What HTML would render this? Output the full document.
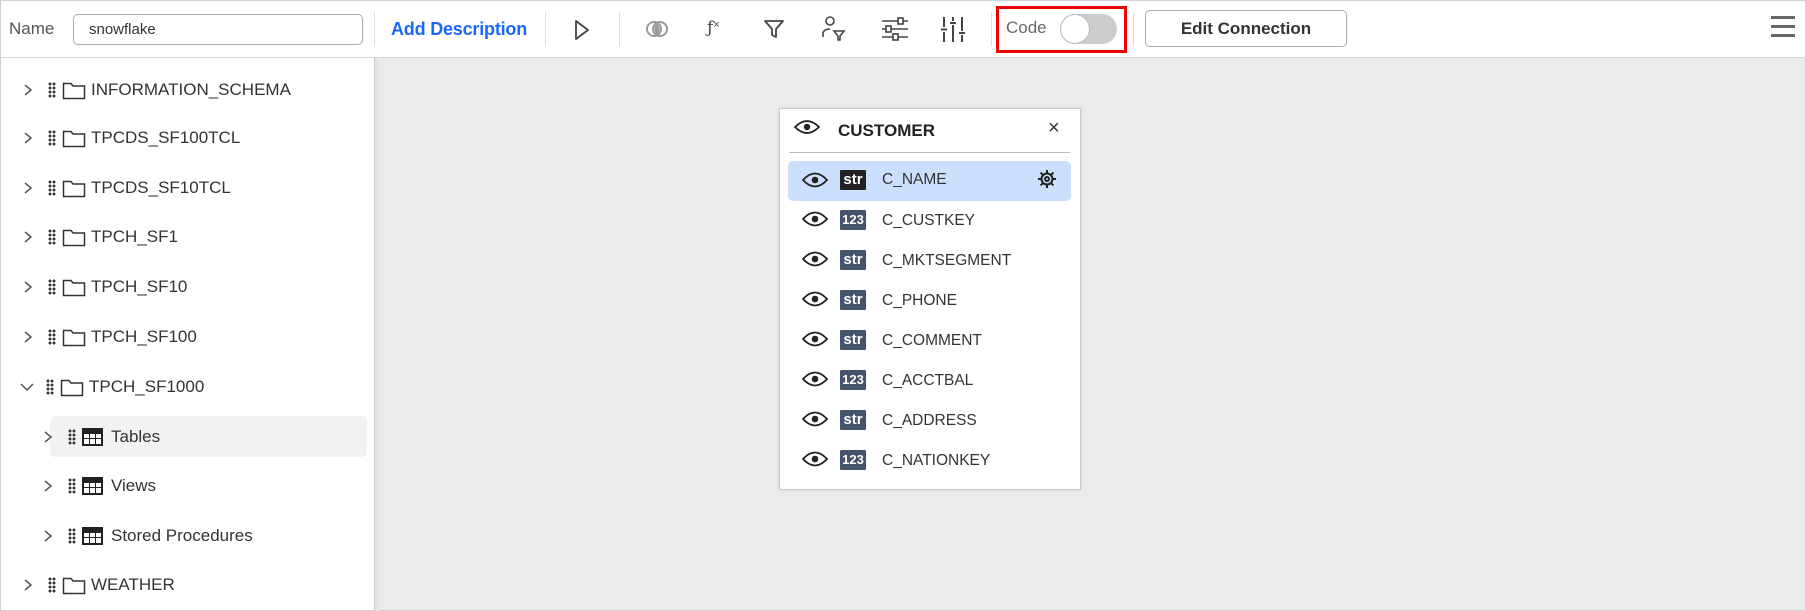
<!DOCTYPE html>
<html><head><meta charset="utf-8"><style>
*{box-sizing:border-box;margin:0;padding:0}
body{width:1806px;height:611px;overflow:hidden;background:#fff;font-family:"Liberation Sans",sans-serif;position:relative;color:#333}
.a{position:absolute}
.frame{left:0;top:0;width:1806px;height:611px;border:1px solid #d0d0d0}
.sep{position:absolute;top:12px;width:1px;height:34px;background:#ddd}
.tb{color:#444}
.row{position:absolute;left:0;height:40px;display:flex;align-items:center;font-size:17px;color:#333}
.dots{width:8px;height:16px;background:radial-gradient(circle,#333 1.3px,transparent 1.6px) 0 0/4px 4px}
.prow{position:absolute;left:788px;width:283px;height:39px;display:flex;align-items:center;font-size:15.5px;color:#333}
.badge{position:absolute;left:52px;width:26px;height:20px;background:#44546a;color:#fff;font-weight:bold;font-size:14px;text-align:center;line-height:20px;border-radius:1px}
.pname{position:absolute;left:94px}
.peye{position:absolute;left:14px;top:10px}
</style></head><body>
<div class="a frame"></div>
<div class="a" style="left:0;top:57px;width:1806px;height:1px;background:#d6d6d6"></div>
<div class="a tb" style="left:9px;top:19px;font-size:17px;color:#555">Name</div>
<div class="a" style="left:73px;top:14px;width:290px;height:31px;border:1px solid #aaa;border-radius:5px;font-size:15px;padding:6px 15px;color:#333">snowflake</div>
<div class="sep" style="left:374px"></div>
<div class="a" style="left:391px;top:19px;font-size:18px;color:#1a66ff;letter-spacing:-0.2px;font-weight:600">Add Description</div>
<div class="sep" style="left:545px"></div>
<svg class="a" style="left:573px;top:19px" width="18" height="22" viewBox="0 0 18 22"><path d="M3 2 L15 11 L3 20 Z" fill="none" stroke="#444" stroke-width="1.8" stroke-linejoin="round"/></svg>
<div class="sep" style="left:619px"></div>
<svg class="a" style="left:645px;top:18px" width="24" height="22"><circle cx="9" cy="11" r="7" fill="none" stroke="#999" stroke-width="2"/><circle cx="15" cy="11" r="7" fill="none" stroke="#999" stroke-width="2"/><path d="M12 5.5 A7 7 0 0 1 12 16.5 A7 7 0 0 1 12 5.5Z" fill="#999"/></svg>
<div class="a" style="left:707px;top:18px;font-size:17px;color:#444;font-family:'DejaVu Serif',serif">ƒ<span style="font-size:11px;vertical-align:5px;font-family:'Liberation Sans'">×</span></div>
<svg class="a" style="left:763px;top:18px" width="22" height="22"><path d="M2 3 H20 L13 11 V19 L9 17 V11 Z" fill="none" stroke="#444" stroke-width="1.8" stroke-linejoin="round"/></svg>
<svg class="a" style="left:821px;top:15px" width="28" height="28"><circle cx="9" cy="6" r="4" fill="none" stroke="#444" stroke-width="1.6"/><path d="M2 22 V18 Q3 14 9 14" fill="none" stroke="#444" stroke-width="1.6"/><path d="M13 16 H23 L19 21 V25 H17 V21 Z" fill="none" stroke="#444" stroke-width="1.6"/></svg>
<svg class="a" style="left:881px;top:16px" width="28" height="26"><g stroke="#444" stroke-width="1.6" fill="#fff"><path d="M1 5 H27 M1 13 H27 M1 21 H27"/><rect x="17" y="2" width="5" height="6"/><rect x="5" y="10" width="5" height="6"/><rect x="12" y="18" width="5" height="6"/></g></svg>
<svg class="a" style="left:940px;top:15px" width="26" height="28"><g stroke="#444" stroke-width="2" fill="none"><path d="M4 2 V12 M4 17 V27 M1 14.5 H7 M13 2 V6 M13 10 V27 M10 8 H16 M22 2 V16 M22 20 V27 M19 18 H25"/></g></svg>
<div class="sep" style="left:991px"></div>
<div class="a" style="left:996px;top:6px;width:131px;height:47px;border:3px solid #e00"></div>
<div class="a" style="left:1006px;top:18px;font-size:17px;color:#666">Code</div>
<div class="a" style="left:1060px;top:14px;width:57px;height:30px;border-radius:15px;background:#ccc"></div>
<div class="a" style="left:1060px;top:14px;width:30px;height:30px;border-radius:50%;background:#fff;border:1px solid #bbb"></div>
<div class="sep" style="left:1133px"></div>
<div class="a" style="left:1145px;top:10px;width:202px;height:37px;border:1px solid #aaa;border-radius:5px;text-align:center;line-height:35px;font-size:17px;font-weight:bold;color:#333">Edit Connection</div>
<div class="a" style="left:1771px;top:16px;width:24px;height:3px;background:#666;box-shadow:0 9px 0 #666,0 18px 0 #666"></div>
<div class="a" style="left:374px;top:58px;width:5px;height:553px;background:#e4e4e4;border-left:1px solid #ccc"></div>
<div class="a" style="left:379px;top:58px;width:1426px;height:552px;background:#ebebeb"></div>
<div class="a" style="left:50px;top:416px;width:317px;height:41px;background:#f2f2f2;border-radius:5px"></div>
<div id="tree"></div>
<div class="a" style="left:779px;top:108px;width:302px;height:382px;background:#fff;border:1px solid #c8c8c8;box-shadow:0 0 3px rgba(0,0,0,.1)"></div>
<svg class="a" style="left:794px;top:119px" width="26" height="16"><path d="M1 8 Q13 -4 25 8 Q13 20 1 8Z" fill="none" stroke="#222" stroke-width="1.8"/><circle cx="13" cy="8" r="3.2" fill="#222"/></svg>
<div class="a" style="left:838px;top:121px;font-size:17px;font-weight:bold;color:#222">CUSTOMER</div>
<div class="a" style="left:1048px;top:117px;font-size:20px;color:#333">×</div>
<div class="a" style="left:789px;top:152px;width:281px;height:1px;background:#bbb"></div>
<div class="a" style="left:788px;top:161px;width:283px;height:40px;background:#cce0fd;border-radius:5px"></div>
<div id="pop"></div>
<svg class="a" style="left:1037px;top:169px" width="20" height="20" viewBox="0 0 20 20"><g fill="none" stroke="#222" stroke-width="2"><circle cx="10" cy="10" r="5.5"/><circle cx="10" cy="10" r="2"/><path d="M10 1v3M10 16v3M1 10h3M16 10h3M3.6 3.6l2.1 2.1M14.3 14.3l2.1 2.1M3.6 16.4l2.1-2.1M14.3 5.7l2.1-2.1"/></g></svg>
<script>
var t='';
var folder='<svg width="24" height="20" style="margin-left:6px"><path d="M1.5 3.5 H9 L11 6 H22.5 V18.5 H1.5Z" fill="none" stroke="#333" stroke-width="1.5"/></svg>';
var table='<svg width="21" height="18" style="margin-left:6px"><rect x="0" y="0" width="21" height="18" fill="#222"/><g fill="#fff"><rect x="2" y="6" width="5" height="4"/><rect x="8" y="6" width="5" height="4"/><rect x="14" y="6" width="5" height="4"/><rect x="2" y="11" width="5" height="5"/><rect x="8" y="11" width="5" height="5"/><rect x="14" y="11" width="5" height="5"/></g></svg>';
var chev='<svg width="12" height="14"><path d="M3 2 L9 7 L3 12" fill="none" stroke="#555" stroke-width="1.5"/></svg>';
var down='<svg width="14" height="12"><path d="M1 3 L7 9 L13 3" fill="none" stroke="#555" stroke-width="1.5"/></svg>';
var rows=[["INFORMATION_SCHEMA",90,0],["TPCDS_SF100TCL",138,0],["TPCDS_SF10TCL",188,0],["TPCH_SF1",237,0],["TPCH_SF10",287,0],["TPCH_SF100",337,0],["TPCH_SF1000",387,2],["Tables",437,1],["Views",486,1],["Stored Procedures",536,1],["WEATHER",585,0]];
rows.forEach(function(r){var c=r[2]==1;var x=c?40:20;
t+='<div class="row" style="top:'+(r[1]-20)+'px;left:'+x+'px">'+(r[2]==2?down:'<span style="width:2px"></span>'+chev)+'<span class="dots" style="margin-left:'+(r[2]==2?12:14)+'px"></span>'+(c?table:folder)+'<span style="margin-left:'+(c?8:5)+'px">'+r[0]+'</span></div>';});
document.getElementById('tree').outerHTML=t;
var p='';var eye='<svg class="peye" width="26" height="18"><path d="M1 9 Q13 -4 25 9 Q13 22 1 9Z" fill="none" stroke="#222" stroke-width="1.8"/><circle cx="13" cy="9" r="3.3" fill="#222"/></svg>';
[["C_NAME","str"],["C_CUSTKEY","123"],["C_MKTSEGMENT","str"],["C_PHONE","str"],["C_COMMENT","str"],["C_ACCTBAL","123"],["C_ADDRESS","str"],["C_NATIONKEY","123"]].forEach(function(r,i){var y=[161,200,240,280,320,360,400,440][i];
p+='<div class="prow" style="top:'+y+'px">'+eye+'<div class="badge" style="top:'+(i==0?9:10)+'px;'+(i==0?'background:#222;':'')+(r[1]=='123'?'font-size:13px;':'font-size:15px;')+'">'+r[1]+'</div><div class="pname" style="top:'+(i==0?10:12)+'px">'+r[0]+'</div></div>';});
document.getElementById('pop').outerHTML=p;
</script>
</body></html>
